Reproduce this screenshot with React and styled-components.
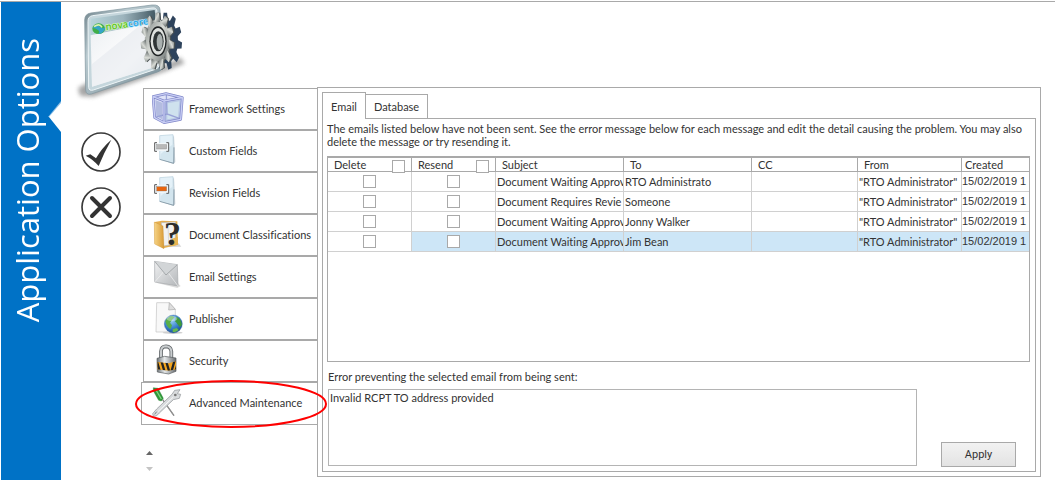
import React, {useState} from "react";
import styled, {createGlobalStyle, css} from "styled-components";

const colors = {
    blue: '#0072c6',
    line: '#a9a9a9',
    cell: '#d0d0d0',
    text: '#333333',
    selected: '#cde6f7',
}

const GlobalStyle = createGlobalStyle`
  *, *:before, *:after {
    box-sizing: border-box;
  }
  body {
    margin: 0;
    background: #fff;
    color: ${colors.text};
    font-family: Lato, Arial, sans-serif;
    font-size: 11px;
    font-variant-ligatures: none;
    line-height: 13px;
  }
  button, input, textarea {
    font: inherit;
    font-variant-ligatures: none;
    color: inherit;
    margin: 0;
  }
`;

const Page = styled.div`
  min-height: 100vh;
  padding-top: 1px;
  display: flex;
  flex-direction: column;
`;

const Body = styled.div`
  flex: 1;
  display: flex;
  padding: 0 14px 0 1px;
  border-top: 1px solid ${colors.line};
`;

const Ribbon = styled.header`
  position: relative;
  flex: 0 0 60px;
  display: flex;
  justify-content: center;
  align-items: flex-start;
  padding: 36px 8px 0 0;
  background: ${colors.blue};
`;

const RibbonTitle = styled.h1`
  margin: 0;
  writing-mode: vertical-rl;
  transform: rotate(180deg);
  color: #fff;
  font-family: "Open Sans", "Noto Sans", sans-serif;
  font-size: 31px;
  font-weight: 400;
  line-height: 48px;
  white-space: nowrap;
`;

const Notch = styled.svg`
  position: absolute;
  right: 0;
  top: 99px;
`;

const Actions = styled.div`
  flex: 0 0 82px;
  min-width: 0;
  display: flex;
  flex-direction: column;
  align-items: flex-start;
`;

const Logo = styled.svg`
  flex: none;
  margin: 0 0 30px 11px;
`;

const RoundButton = styled.button`
  width: 40px;
  height: 40px;
  margin: 0 0 15px 20px;
  padding: 0;
  border: 0;
  border-radius: 50%;
  background: none;
  svg {
    display: block;
  }
`;

const Nav = styled.nav`
  flex: 0 0 174px;
  margin-top: 86px;
  display: flex;
  flex-direction: column;
`;

const NavItem = styled.button`
  position: relative;
  display: flex;
  align-items: center;
  gap: 5px;
  height: 42px;
  padding: 0 0 2px 8px;
  border: 1px solid ${colors.line};
  border-right: 0;
  background: #fff;
  text-align: left;
  white-space: nowrap;
  ${({ $active }) => $active && css`
    height: 43px;
    margin-left: -2px;
    padding-left: 10px;
  `}
`;

const Highlight = styled.svg`
  position: absolute;
  left: -8px;
  top: -4px;
  pointer-events: none;
`;

const Scroller = styled.div`
  display: flex;
  flex-direction: column;
  gap: 4px;
  padding-top: 22px;
`;

const ScrollButton = styled.button`
  width: 13px;
  height: 12px;
  padding: 0;
  border: 0;
  background: none;
  color: ${({ disabled }) => disabled ? '#c4c4c4' : '#666'};
  svg {
    display: block;
    margin: auto;
  }
`;

const Panel = styled.main`
  flex: 1;
  min-width: 0;
  margin: 85px 0 3px;
  padding: 4px;
  border: 1px solid ${colors.line};
  display: flex;
  flex-direction: column;
`;

const Tabs = styled.div`
  display: flex;
  align-items: flex-end;
`;

const Tab = styled.button`
  position: relative;
  height: ${({ $active }) => $active ? '27px' : '24px'};
  margin-bottom: ${({ $active }) => $active ? '-1px' : '0'};
  margin-left: ${({ $active }) => $active ? '0' : '-1px'};
  padding: 0 8px;
  border: 1px solid ${colors.line};
  border-bottom: 0;
  background: #fff;
  z-index: ${({ $active }) => $active ? 1 : 0};
`;

const TabPanel = styled.section`
  flex: 1;
  display: flex;
  flex-direction: column;
  padding: 3px 5px 5px 4px;
  border: 1px solid ${colors.line};
`;

const Intro = styled.p`
  margin: 0 0 8px;
`;

const GridBox = styled.div`
  flex: 1;
  border: 1px solid ${colors.line};
  border-top-width: 2px;
`;

const Table = styled.table`
  width: 100%;
  table-layout: fixed;
  border-collapse: separate;
  border-spacing: 0;
`;

const Col = styled.col`
  width: ${({ $width }) => $width || 'auto'};
`;

const HeadCell = styled.th`
  height: 14px;
  padding: 0 6px;
  border-right: 1px solid ${colors.line};
  border-bottom: 1px solid ${colors.line};
  font-weight: 400;
  text-align: left;
  &:last-child {
    border-right: 0;
    padding: 0 3px;
  }
`;

const HeadLabel = styled.div`
  display: flex;
  justify-content: space-between;
  align-items: flex-start;
  height: 13px;
`;

const Cell = styled.td`
  height: 20px;
  padding: 0 1px;
  border-right: 1px solid ${colors.cell};
  border-bottom: 1px solid ${colors.cell};
  background: ${({ $selected }) => $selected ? colors.selected : '#fff'};
  text-align: ${({ $center }) => $center ? 'center' : 'left'};
  white-space: nowrap;
  overflow: hidden;
  &:last-child {
    border-right: 0;
  }
`;

const DateCell = styled(Cell)`
  padding: 0;
  font-family: "Liberation Sans", Arial, sans-serif;
`;

const Tick = styled.input`
  appearance: none;
  display: block;
  width: 13px;
  height: 13px;
  border: 1px solid ${colors.line};
  background: #fff;
  &:checked {
    background: ${colors.blue};
  }
  ${HeadLabel} & {
    position: relative;
    top: 2px;
  }
  ${Cell} & {
    margin: 0 auto;
  }
`;

const ErrorLabel = styled.label`
  margin: 8px 0 6px 1px;
`;

const ErrorRow = styled.div`
  display: flex;
  align-items: flex-end;
  gap: 24px;
  padding: 0 14px 0 1px;
`;

const ErrorText = styled.textarea`
  flex: 1;
  min-width: 0;
  height: 77px;
  padding: 1px;
  border: 1px solid #b4b4b4;
  border-radius: 0;
  resize: none;
  outline: none;
`;

const ApplyButton = styled.button`
  width: 75px;
  height: 25px;
  margin-bottom: -1px;
  padding: 0;
  border: 1px solid ${colors.line};
  background: linear-gradient(#f2f2f2, #e3e3e3);
  font-family: Roboto, sans-serif;
`;

const CubeIcon = () => (
    <svg width="32" height="32" viewBox="0 0 96 96" aria-hidden="true">
        <path d="M2 14L42 4L91 16L86 83L36 93L7 78Z" fill="#dfe3f8" />
        <path d="M36 28L90 19L85 83L36 92Z" fill="#b9c8e6" />
        <path d="M46 34L82 28L78 76L46 82Z" fill="#cfe2ee" />
        <path d="M10 24L30 32L30 82L13 72Z" fill="#b3bce0" />
        <path d="M43 6L45 66L84 80M45 66L9 76" fill="none" stroke="#9aa3d8" strokeWidth="4" />
        <path d="M3 14L42 5L91 17L86 82L36 92L8 77ZM3 14L36 27L91 17M36 27V92" fill="none" stroke="#8087c8" strokeWidth="8" strokeLinejoin="round" />
        <path d="M3 14L42 5L91 17L86 82L36 92L8 77ZM3 14L36 27L91 17M36 27V92" fill="none" stroke="#c9cff5" strokeWidth="4" strokeLinejoin="round" />
    </svg>
)

const FieldIcon = ({ fill }) => (
    <svg width="32" height="32" viewBox="0 0 96 96" aria-hidden="true">
        <path d="M24 76L64 90L70 84L66 4Z" fill="#c9d2d8" />
        <path d="M23 5L63 2L65 87L23 76Z" fill="#e4f1f8" stroke="#b5cfdd" strokeWidth="2" />
        <path d="M26 60L64 30L64 85L24 75Z" fill="#d3e5ee" />
        <path d="M23 76L65 88L66 40" fill="none" stroke="#6f8592" strokeWidth="2" />
        <rect x="8" y="27" width="42" height="24" fill="#f2f6f8" />
        <path d="M15 26H8V52H15M43 26H50V52H43" fill="none" stroke="#5b5b5b" strokeWidth="3" />
        <rect x="14" y="32" width="30" height="13" fill={fill} stroke="#777" strokeWidth="1" />
    </svg>
)

const FolderIcon = () => (
    <svg width="32" height="32" viewBox="0 0 96 96" aria-hidden="true">
        <defs>
            <linearGradient id="folder" x1="0" x2="1">
                <stop offset="0" stopColor="#f6d486" />
                <stop offset="1" stopColor="#d99a35" />
            </linearGradient>
        </defs>
        <path d="M34 88L88 86L80 76Z" fill="#d6d6d6" />
        <path d="M8 12L30 8L76 10L78 80L36 90L8 76Z" fill="#e5ae4f" />
        <path d="M28 14L70 12L70 78L34 84Z" fill="#f1f1f1" stroke="#bbb" strokeWidth="2" />
        <path d="M48 16L50 80" stroke="#ccc" strokeWidth="2" />
        <path d="M7 12L33 24L36 92L8 78Z" fill="url(#folder)" stroke="#c98c2c" strokeWidth="1" />
        <path d="M60 62L78 56L78 80L60 84Z" fill="#e7b452" />
        <text x="36" y="80" fontFamily="Liberation Serif, serif" fontSize="102" fontWeight="700" fill="#2c2c2c">?</text>
    </svg>
)

const EnvelopeIcon = () => (
    <svg width="32" height="32" viewBox="0 0 96 96" aria-hidden="true">
        <defs>
            <linearGradient id="envelope" x1="0" y1="0" x2="1" y2="1">
                <stop offset="0" stopColor="#f0f1f2" />
                <stop offset="1" stopColor="#b4b7ba" />
            </linearGradient>
        </defs>
        <path d="M12 68L76 84L86 78L78 70Z" fill="#dcdcdc" />
        <path d="M8 4L76 14L78 78L8 66Z" fill="url(#envelope)" stroke="#a5a8ab" strokeWidth="2" />
        <path d="M8 66L34 36M78 78L50 40" stroke="#f4f4f4" strokeWidth="2" />
        <path d="M8 4L42 45L76 14" fill="#d2d5d7" stroke="#8d9194" strokeWidth="2" />
    </svg>
)

const PublisherIcon = () => (
    <svg width="32" height="32" viewBox="0 0 96 96" aria-hidden="true">
        <defs>
            <radialGradient id="globe" cx="0.4" cy="0.3" r="0.8">
                <stop offset="0" stopColor="#9bd0f5" />
                <stop offset="0.5" stopColor="#3d86cf" />
                <stop offset="1" stopColor="#123f86" />
            </radialGradient>
        </defs>
        <path d="M14 2H52L70 22V90H12Z" fill="#f8f8f8" stroke="#c2c2c2" strokeWidth="2" />
        <path d="M52 2L50 24L70 22Z" fill="#dedede" stroke="#aaa" strokeWidth="2" />
        <ellipse cx="62" cy="92" rx="30" ry="4" fill="#cfcfcf" />
        <circle cx="64" cy="66" r="27" fill="url(#globe)" stroke="#2a5c9c" strokeWidth="1" />
        <path d="M40 58Q46 44 60 42L68 46L60 54L54 62L60 70L56 82Q44 76 40 58Z" fill="#58ae48" />
        <path d="M72 44Q84 48 88 60L90 68L84 76L76 66L70 58Z" fill="#3f9a3c" />
        <path d="M62 82L74 78L80 84Q72 92 62 90Z" fill="#67b84e" />
        <ellipse cx="60" cy="50" rx="16" ry="8" fill="#fff" opacity="0.35" />
    </svg>
)

const PadlockIcon = () => (
    <svg width="32" height="32" viewBox="0 0 96 96" aria-hidden="true">
        <defs>
            <linearGradient id="steel" x1="0" x2="1">
                <stop offset="0" stopColor="#6d7377" />
                <stop offset="0.4" stopColor="#e6e9ea" />
                <stop offset="1" stopColor="#676b6e" />
            </linearGradient>
            <clipPath id="lockBand">
                <path d="M16 54L50 58L72 52V76L50 80L16 76Z" />
            </clipPath>
        </defs>
        <path d="M27 44V22Q28 7 42 7Q57 8 58 22V42" fill="none" stroke="#5f6467" strokeWidth="11" />
        <path d="M27 44V22Q28 7 42 7Q57 8 58 22V42" fill="none" stroke="#c9cdcf" strokeWidth="6" />
        <path d="M15 43L38 37L72 42V82L50 90L16 84Z" fill="url(#steel)" stroke="#55595c" strokeWidth="2" />
        <g clipPath="url(#lockBand)">
            <rect x="12" y="50" width="64" height="34" fill="#f4a61f" />
            <path d="M14 50L24 84M28 50L38 84M42 50L52 84M68 48L58 84M80 48L70 84" stroke="#242424" strokeWidth="7" />
        </g>
    </svg>
)

const ToolsIcon = () => (
    <svg width="32" height="32" viewBox="0 0 96 96" aria-hidden="true">
        <path d="M32 38L66 86" stroke="#6e6e6e" strokeWidth="4" />
        <path d="M32 38L66 86" stroke="#d8d8d8" strokeWidth="1" />
        <path d="M4 2L18 4L34 34L28 42L20 40L4 12Z" fill="#2f9a3a" stroke="#1d6a27" strokeWidth="1" />
        <path d="M10 6L28 36" stroke="#86d384" strokeWidth="4" />
        <path d="M60 22L68 10L84 8L76 20L86 22L82 34L64 38L22 78Q14 90 4 88L2 80L14 66Z" fill="#d9dcde" stroke="#8b9093" strokeWidth="2" />
        <path d="M64 30L18 74" stroke="#f7f7f7" strokeWidth="3" />
        <path d="M14 74L8 82" stroke="#7e8386" strokeWidth="3" />
        <circle cx="70" cy="24" r="4" fill="#777" />
    </svg>
)

const gearTeeth = Array.from({ length: 11 }, (_, i) => i * 360 / 11)

const Gear = ({ fill }) => (
    <g fill={fill}>
        <ellipse rx="38" ry="66" />
        {gearTeeth.map(angle => (
            <path key={angle} d="M-14 -58L-9 -86H9L14 -58Z" transform={`scale(0.58 1) rotate(${angle})`} />
        ))}
    </g>
)

const AppLogo = () => (
    <Logo width="116" height="100" viewBox="6 6 348 300" role="img" aria-label="novacore">
        <defs>
            <linearGradient id="frame" x1="0" y1="0" x2="1" y2="1">
                <stop offset="0" stopColor="#6e8189" />
                <stop offset="0.3" stopColor="#b9cad0" />
                <stop offset="1" stopColor="#768b95" />
            </linearGradient>
            <linearGradient id="screen" x1="0" y1="0" x2="1" y2="1">
                <stop offset="0" stopColor="#eceff2" />
                <stop offset="0.6" stopColor="#ffffff" />
                <stop offset="1" stopColor="#e9edf2" />
            </linearGradient>
            <linearGradient id="titleBar" x1="0" x2="1">
                <stop offset="0" stopColor="#b8d4da" />
                <stop offset="0.5" stopColor="#9db4bd" />
                <stop offset="1" stopColor="#425963" />
            </linearGradient>
            <linearGradient id="gear" x1="0" y1="0" x2="1" y2="1">
                <stop offset="0" stopColor="#7f8685" />
                <stop offset="0.45" stopColor="#d8dbd6" />
                <stop offset="1" stopColor="#5d6464" />
            </linearGradient>
            <filter id="soft" x="-20%" y="-50%" width="140%" height="200%">
                <feGaussianBlur stdDeviation="6" />
            </filter>
        </defs>
        <path d="M24 264L60 244L270 204L330 172L344 190L290 212L70 290L30 288Z" fill="#777" opacity="0.65" filter="url(#soft)" />
        <path d="M44 60Q44 42 62 39L246 15Q270 13 270 30L278 202Q276 212 262 216L64 282Q48 286 47 270Z" fill="url(#frame)" stroke="#7d929c" strokeWidth="2" />
        <path d="M54 64Q54 49 68 47L246 24Q260 22 261 34L267 196Q266 205 256 208L70 270Q57 274 56 262Z" fill="#c5d6dc" stroke="#eef5f7" strokeWidth="3" />
        <path d="M62 68L64 56L254 30L258 66L62 106Z" fill="url(#titleBar)" />
        <path d="M62 106L258 66L264 198L66 260Z" fill="url(#screen)" />
        <path d="M66 192L210 76L258 66L264 198L66 260Z" fill="#e3e8ed" opacity="0.55" />
        <ellipse cx="86" cy="86" rx="19" ry="16" fill="#3fae49" />
        <path d="M68 84Q80 70 92 82Q98 88 106 82Q100 104 84 102Q92 96 84 90Q76 84 68 84Z" fill="#35a5c8" />
        <path d="M72 80Q88 68 96 82" fill="none" stroke="#d9f3b0" strokeWidth="5" />
        <text x="108" y="91" transform="rotate(-8 108 91)" fontFamily="Open Sans, sans-serif" fontSize="29" fontWeight="600" fill="#5fc21f" stroke="#d4f5bf" strokeWidth="4" paintOrder="stroke">
            nova<tspan fill="#1ea7ea" stroke="#c2eafb">core</tspan>
        </text>
        <g transform="translate(286 124)"><Gear fill="#2e435c" /></g>
        <g transform="translate(266 124)"><Gear fill="#4a5152" /></g>
        <g transform="translate(262 124)">
            <Gear fill="url(#gear)" />
            <ellipse cx="2" rx="26" ry="45" fill="#202425" />
            <ellipse cx="2" rx="22" ry="40" fill="#dfe2df" />
            <ellipse cx="3" rx="16" ry="30" fill="#2f3536" />
            <ellipse cx="7" cy="2" rx="9" ry="24" fill="#a9b0af" />
        </g>
    </Logo>
)

const navItems = [
    { label: 'Framework Settings', icon: <CubeIcon /> },
    { label: 'Custom Fields', icon: <FieldIcon fill="#b9b9b9" /> },
    { label: 'Revision Fields', icon: <FieldIcon fill="#e8650e" /> },
    { label: 'Document Classifications', icon: <FolderIcon /> },
    { label: 'Email Settings', icon: <EnvelopeIcon /> },
    { label: 'Publisher', icon: <PublisherIcon /> },
    { label: 'Security', icon: <PadlockIcon /> },
    { label: 'Advanced Maintenance', icon: <ToolsIcon /> },
]

const emails = [
    { subject: 'Document Waiting Approv', to: 'RTO Administrato' },
    { subject: 'Document Requires Revie', to: 'Someone' },
    { subject: 'Document Waiting Approv', to: 'Jonny Walker' },
    { subject: 'Document Waiting Approv', to: 'Jim Bean' },
]

const widths = ['84px', '84px', '128px', '128px', null, '104px', '67px']

const App = () => {

    const [section, setSection] = useState('Advanced Maintenance');
    const [tab, setTab] = useState('Email');
    const [selected, setSelected] = useState(3);

    return (
        <>
            <GlobalStyle />
            <Page>
                <Body>
                    <Ribbon>
                        <RibbonTitle>Application Options</RibbonTitle>
                        <Notch width="13" height="32" viewBox="0 0 13 32" aria-hidden="true">
                            <path d="M0 16L13 0V4L3 16Z" fill="#8dbfe6" />
                            <path d="M1 16L13 2V31Z" fill="#fff" />
                        </Notch>
                    </Ribbon>
                    <Actions>
                        <AppLogo />
                        <RoundButton type="button" aria-label="OK">
                            <svg width="40" height="40" viewBox="0 0 120 120">
                                <circle cx="60" cy="60" r="57" fill="#fff" stroke="#3a3a3a" strokeWidth="5" />
                                <path d="M14 71L28 67L45 79Q62 48 91 23Q70 60 53 102Q36 82 14 71Z" fill="#333" />
                            </svg>
                        </RoundButton>
                        <RoundButton type="button" aria-label="Cancel">
                            <svg width="40" height="40" viewBox="0 0 120 120">
                                <circle cx="60" cy="60" r="57" fill="#fff" stroke="#3a3a3a" strokeWidth="5" />
                                <path d="M33 33L87 87M87 33L33 87" fill="none" stroke="#333" strokeWidth="12" strokeLinecap="round" />
                            </svg>
                        </RoundButton>
                    </Actions>
                    <Nav>
                        {navItems.map(({ label, icon }) => (
                            <NavItem key={label} type="button" $active={section === label} onClick={() => setSection(label)}>
                                {icon}
                                {label}
                                {section === label && (
                                    <Highlight width="194" height="50" viewBox="0 0 194 50" aria-hidden="true">
                                        <ellipse cx="97" cy="25" rx="95" ry="23" fill="none" stroke="#f00" strokeWidth="2" />
                                    </Highlight>
                                )}
                            </NavItem>
                        ))}
                        <Scroller>
                            <ScrollButton type="button" aria-label="Scroll up">
                                <svg width="7" height="4" viewBox="0 0 7 4"><path d="M0 4L3.5 0L7 4Z" fill="currentColor" /></svg>
                            </ScrollButton>
                            <ScrollButton type="button" aria-label="Scroll down" disabled>
                                <svg width="7" height="4" viewBox="0 0 7 4"><path d="M0 0L3.5 4L7 0Z" fill="currentColor" /></svg>
                            </ScrollButton>
                        </Scroller>
                    </Nav>
                    <Panel>
                        <Tabs role="tablist">
                            {['Email', 'Database'].map(name => (
                                <Tab key={name} type="button" role="tab" aria-selected={tab === name} $active={tab === name} onClick={() => setTab(name)}>
                                    {name}
                                </Tab>
                            ))}
                        </Tabs>
                        <TabPanel role="tabpanel">
                            <Intro>
                                The emails listed below have not been sent. See the error message below for each message and edit the detail causing the problem. You may also delete the message or try resending it.
                            </Intro>
                            <GridBox>
                                <Table>
                                    <colgroup>
                                        {widths.map((width, i) => <Col key={i} $width={width} />)}
                                    </colgroup>
                                    <thead>
                                        <tr>
                                            <HeadCell><HeadLabel>Delete <Tick type="checkbox" aria-label="Delete all" /></HeadLabel></HeadCell>
                                            <HeadCell><HeadLabel>Resend <Tick type="checkbox" aria-label="Resend all" /></HeadLabel></HeadCell>
                                            <HeadCell>Subject</HeadCell>
                                            <HeadCell>To</HeadCell>
                                            <HeadCell>CC</HeadCell>
                                            <HeadCell>From</HeadCell>
                                            <HeadCell>Created</HeadCell>
                                        </tr>
                                    </thead>
                                    <tbody>
                                        {emails.map(({ subject, to }, i) => (
                                            <tr key={i} onClick={() => setSelected(i)}>
                                                <Cell $center><Tick type="checkbox" aria-label={`Delete email to ${to}`} /></Cell>
                                                <Cell $center $selected={selected === i}><Tick type="checkbox" aria-label={`Resend email to ${to}`} /></Cell>
                                                <Cell $selected={selected === i}>{subject}</Cell>
                                                <Cell $selected={selected === i}>{to}</Cell>
                                                <Cell $selected={selected === i} />
                                                <Cell $selected={selected === i}>"RTO Administrator"</Cell>
                                                <DateCell $selected={selected === i}>15/02/2019 1</DateCell>
                                            </tr>
                                        ))}
                                    </tbody>
                                </Table>
                            </GridBox>
                            <ErrorLabel htmlFor="error">Error preventing the selected email from being sent:</ErrorLabel>
                            <ErrorRow>
                                <ErrorText id="error" readOnly value="Invalid RCPT TO address provided" />
                                <ApplyButton type="button">Apply</ApplyButton>
                            </ErrorRow>
                        </TabPanel>
                    </Panel>
                </Body>
            </Page>
        </>
    )
}

export default App
